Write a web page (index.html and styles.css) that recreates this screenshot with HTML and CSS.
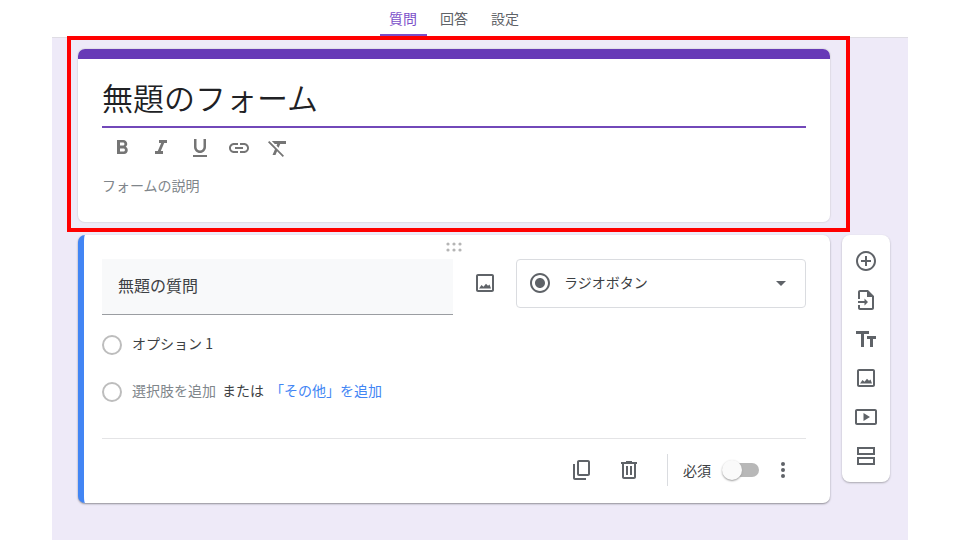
FILE: index.html
```html
<!DOCTYPE html>
<html lang="ja">
<head>
    <meta charset="UTF-8">
    <meta name="viewport" content="width=device-width, initial-scale=1.0">
    <title>無題のフォーム</title>
    <link rel="stylesheet" href="styles.css">
</head>
<body>
    <div class="editor">
        <nav class="tabs">
            <a class="tab active" href="#questions">質問</a>
            <a class="tab" href="#responses">回答</a>
            <a class="tab" href="#settings">設定</a>
        </nav>

        <main class="form-area" id="questions">
            <div class="highlight">
                <section class="card title-card">
                    <div class="title-bar"></div>
                    <div class="title-body">
                        <input class="form-title" type="text" value="無題のフォーム" aria-label="フォームのタイトル">
                        <div class="toolbar">
                            <button class="tool" type="button" aria-label="太字">
                                <svg class="icon" viewBox="0 0 24 24"><path d="M15.600 10.790c.97-.67 1.650-1.770 1.650-2.790 0-2.260-1.750-4-4-4H7v14h7.040c2.090 0 3.710-1.700 3.710-3.790 0-1.520-.86-2.820-2.150-3.420zM10 6.500h3c.83 0 1.500.67 1.500 1.500s-.67 1.500-1.500 1.500h-3v-3zm3.500 9H10v-3h3.500c.83 0 1.500.67 1.500 1.500s-.67 1.500-1.500 1.500z"/></svg>
                            </button>
                            <button class="tool" type="button" aria-label="斜体">
                                <svg class="icon" viewBox="0 0 24 24"><path d="M10 4v3h2.210l-3.420 8H6v3h8v-3h-2.210l3.420-8H18V4z"/></svg>
                            </button>
                            <button class="tool" type="button" aria-label="下線">
                                <svg class="icon" viewBox="0 0 24 24"><path d="M12 17c3.310 0 6-2.690 6-6V3h-2.500v8c0 1.930-1.570 3.500-3.500 3.500S8.500 12.930 8.500 11V3H6v8c0 3.310 2.690 6 6 6zm-7 2v2h14v-2H5z"/></svg>
                            </button>
                            <button class="tool" type="button" aria-label="リンクを挿入">
                                <svg class="icon" viewBox="0 0 24 24"><path d="M3.900 12c0-1.710 1.390-3.100 3.100-3.100h4V7H7c-2.760 0-5 2.240-5 5s2.240 5 5 5h4v-1.900H7c-1.710 0-3.100-1.390-3.100-3.100zM8 13h8v-2H8v2zm9-6h-4v1.900h4c1.710 0 3.100 1.390 3.100 3.100s-1.390 3.100-3.100 3.100h-4V17h4c2.760 0 5-2.240 5-5s-2.240-5-5-5z"/></svg>
                            </button>
                            <button class="tool" type="button" aria-label="書式をクリア">
                                <svg class="icon" viewBox="0 0 24 24"><path d="M3.270 5L2 6.270l6.970 6.970L6.500 19h3l1.570-3.660L16.730 21 18 19.730 3.550 5.270 3.270 5zM6 5v.18L8.820 8h2.400l-.72 1.680 2.100 2.100L14.210 8H20V5H6z"/></svg>
                            </button>
                        </div>
                        <input class="form-description" type="text" placeholder="フォームの説明" aria-label="フォームの説明">
                    </div>
                </section>
            </div>

            <section class="card question-card">
                <div class="drag-handle">
                    <svg width="16" height="10" viewBox="0 0 16 10"><circle cx="2" cy="2" r="1.600"/><circle cx="8" cy="2" r="1.600"/><circle cx="14" cy="2" r="1.600"/><circle cx="2" cy="8" r="1.600"/><circle cx="8" cy="8" r="1.600"/><circle cx="14" cy="8" r="1.600"/></svg>
                </div>

                <div class="question-row">
                    <input class="question-title" type="text" value="無題の質問" aria-label="質問">
                    <button class="image-button" type="button" aria-label="画像を追加">
                        <svg class="icon" viewBox="0 0 24 24"><path d="M19 5v14H5V5h14m0-2H5c-1.100 0-2 .9-2 2v14c0 1.100.9 2 2 2h14c1.100 0 2-.9 2-2V5c0-1.100-.9-2-2-2z"/><path d="M6 17.500l2.500-3.500 2 1.800 2.500-3 2 2 1.500-1.300 1.500 4z"/></svg>
                    </button>
                    <div class="type-box">
                        <svg class="icon" viewBox="0 0 24 24"><path d="M12 7c-2.760 0-5 2.240-5 5s2.240 5 5 5 5-2.240 5-5-2.240-5-5-5zm0-5C6.480 2 2 6.480 2 12s4.480 10 10 10 10-4.480 10-10S17.520 2 12 2zm0 18c-4.420 0-8-3.580-8-8s3.580-8 8-8 8 3.580 8 8-3.580 8-8 8z"/></svg>
                        <select class="type-select" aria-label="質問の種類">
                            <option>ラジオボタン</option>
                        </select>
                        <svg class="icon arrow" viewBox="0 0 24 24"><path d="M7 10l5 5 5-5z"/></svg>
                    </div>
                </div>

                <div class="option-row">
                    <input class="radio" type="radio" name="option" id="option1">
                    <label for="option1">オプション 1</label>
                </div>
                <div class="option-row">
                    <input class="radio" type="radio" name="option" id="option2">
                    <label class="add-option" for="option2">選択肢を追加</label>
                    <span>または</span>
                    <a class="add-other" href="#other">「その他」を追加</a>
                </div>

                <div class="card-footer">
                    <button class="footer-button" type="button" aria-label="コピーを作成">
                        <svg class="icon" viewBox="0 0 24 24"><path d="M18 2H9c-1.100 0-2 .9-2 2v12c0 1.100.9 2 2 2h9c1.100 0 2-.9 2-2V4c0-1.100-.9-2-2-2zm0 14H9V4h9v12zM3 6h2v14h11v2H5c-1.100 0-2-.9-2-2V6z"/></svg>
                    </button>
                    <button class="footer-button" type="button" aria-label="削除">
                        <svg class="icon" viewBox="0 0 24 24"><path d="M15 4V3H9v1H4v2h1v13c0 1.100.9 2 2 2h10c1.100 0 2-.9 2-2V6h1V4h-5zm2 15H7V6h10v13zM9 8h2v9H9zm4 0h2v9h-2z"/></svg>
                    </button>
                    <div class="separator"></div>
                    <label class="required-label" for="required">必須</label>
                    <input class="toggle" type="checkbox" id="required">
                    <button class="more-button" type="button" aria-label="その他のオプション">
                        <svg class="icon" viewBox="0 0 24 24"><circle cx="12" cy="6" r="2"/><circle cx="12" cy="12" r="2"/><circle cx="12" cy="18" r="2"/></svg>
                    </button>
                </div>
            </section>

            <aside class="side-menu">
                <button class="side-button" type="button" aria-label="質問を追加">
                    <svg class="icon" viewBox="0 0 24 24"><path d="M13 7h-2v4H7v2h4v4h2v-4h4v-2h-4V7zm-1-5C6.480 2 2 6.480 2 12s4.480 10 10 10 10-4.480 10-10S17.520 2 12 2zm0 18c-4.410 0-8-3.590-8-8s3.590-8 8-8 8 3.590 8 8-3.590 8-8 8z"/></svg>
                </button>
                <button class="side-button" type="button" aria-label="質問をインポート">
                    <svg class="icon" viewBox="0 0 24 24"><path d="M14 2H6c-1.100 0-2 .9-2 2v7h2V4h7v5h5v11H6v-3H4v3c0 1.100.9 2 2 2h12c1.100 0 2-.9 2-2V8l-6-6z"/><path d="M13 3v6h6z"/><path d="M4 13h6.500v-2.500L14 14l-3.500 3.500V15H4z"/></svg>
                </button>
                <button class="side-button" type="button" aria-label="タイトルと説明を追加">
                    <svg class="icon" viewBox="0 0 24 24"><path d="M2 4v3h5v13h3V7h5V4H2z"/><path d="M22 9h-9v3h3v8h3v-8h3V9z"/></svg>
                </button>
                <button class="side-button" type="button" aria-label="画像を追加">
                    <svg class="icon" viewBox="0 0 24 24"><path d="M19 5v14H5V5h14m0-2H5c-1.100 0-2 .9-2 2v14c0 1.100.9 2 2 2h14c1.100 0 2-.9 2-2V5c0-1.100-.9-2-2-2z"/><path d="M6 17.500l2.500-3.500 2 1.800 2.500-3 2 2 1.500-1.300 1.500 4z"/></svg>
                </button>
                <button class="side-button" type="button" aria-label="動画を追加">
                    <svg class="icon" viewBox="0 0 24 24"><path d="M9.500 8v8l6.500-4z"/><path d="M21 4H3c-1.100 0-2 .9-2 2v12c0 1.100.9 2 2 2h18c1.100 0 2-.9 2-2V6c0-1.100-.9-2-2-2zm0 14H3V6h18v12z"/></svg>
                </button>
                <button class="side-button" type="button" aria-label="セクションを追加">
                    <svg class="icon" viewBox="0 0 24 24"><path d="M19 5v4H5V5h14m2-2H3v8h18V3zM19 15v4H5v-4h14m2-2H3v8h18v-8z"/></svg>
                </button>
            </aside>
        </main>
    </div>
</body>
</html>
```
FILE: styles.css
```css
* {
    box-sizing: border-box;
}
body {
    margin: 0;
    background: #fff;
    color: #3c4043;
    font-family: "Noto Sans CJK JP", sans-serif;
    font-size: 14px;
}
button, input, select {
    margin: 0;
    padding: 0;
    border: 0;
    border-radius: 0;
    background: none;
    color: inherit;
    font: inherit;
    outline: none;
}
button, a, select {
    cursor: pointer;
}
a {
    text-decoration: none;
}
.icon {
    display: block;
    width: 24px;
    height: 24px;
    fill: #5f6368;
}

.editor {
    display: flex;
    flex-direction: column;
    min-height: 100vh;
    margin: 0 52px;
}

/* tabs */
.tabs {
    display: flex;
    justify-content: center;
    gap: 4px;
    height: 38px;
    padding-right: 52px;
    border-bottom: 1px solid #dfdde4;
}
.tab {
    width: 47px;
    border-bottom: 3px solid transparent;
    color: #5f6368;
    line-height: 36px;
    height: 37px;
    text-align: center;
}
.tab.active {
    border-bottom-color: #7b4fc9;
    color: #7b4fc9;
}

/* cards */
.form-area {
    display: grid;
    flex: 1;
    grid-template-columns: 1fr 48px;
    align-content: start;
    align-items: start;
    gap: 13px 12px;
    padding: 11px 18px 36px 26px;
    background: #eeeaf8;
}
.card {
    overflow: hidden;
    border-radius: 7px;
    background: #fff;
}
.highlight {
    position: relative;
    grid-column: 1;
}
.highlight::after {
    content: "";
    position: absolute;
    inset: -13px -20px -10px -11px;
    border: 4px solid #f00;
    pointer-events: none;
}
.title-card {
    box-shadow: 0 0 1px 1px #dfdce6;
}
.title-bar {
    height: 10px;
    background: #673ab7;
}
.title-body {
    padding: 19px 24px 24px;
}
.form-title {
    display: block;
    width: 100%;
    height: 50px;
    padding-bottom: 12px;
    border-bottom: 2px solid #7248b9;
    color: #202124;
    font-size: 31px;
    font-weight: 350;
}
.toolbar {
    display: flex;
    height: 40px;
}
.tool {
    display: grid;
    place-items: center;
    width: 39px;
}
.tool .icon {
    fill: #757575;
}
.form-description {
    display: block;
    width: 100%;
    height: 24px;
    margin-top: 6px;
    padding-bottom: 2px;
}
.form-description::placeholder {
    color: #80868b;
}

/* question */
.question-card {
    grid-column: 1;
    padding: 0 24px 0 18px;
    border-left: 6px solid #4285f4;
    box-shadow: 0 1px 2px 0 #8f8d96;
}
.drag-handle {
    display: flex;
    justify-content: center;
    height: 24px;
    padding-top: 7px;
}
.drag-handle svg {
    fill: #b5b5b5;
}
.question-row {
    display: flex;
    align-items: flex-start;
    margin-bottom: 6px;
}
.question-title {
    flex: 1;
    min-width: 0;
    height: 56px;
    padding: 0 16px 4px;
    border-bottom: 1px solid #9a9da1;
    background: #f8f9fa;
    font-size: 16px;
}
.image-button {
    display: grid;
    place-items: center;
    width: 63px;
    height: 47px;
}
.type-box {
    display: flex;
    align-items: center;
    width: 290px;
    height: 49px;
    padding: 0 12px 2px 11px;
    border: 1px solid #dadce0;
    border-radius: 4px;
}
.type-select {
    flex: 1;
    height: 46px;
    padding: 0 0 2px 12px;
    appearance: none;
}
.option-row {
    display: flex;
    align-items: center;
    gap: 6px;
    height: 47px;
}
.option-row label, .option-row span, .option-row a {
    padding-bottom: 3px;
}
.radio {
    width: 20px;
    height: 20px;
    margin-right: 4px;
    border: 2px solid #bdbdbd;
    border-radius: 50%;
    appearance: none;
}
.add-option {
    color: #80868b;
}
.add-other {
    color: #4285f4;
}
.card-footer {
    display: flex;
    align-items: center;
    justify-content: flex-end;
    height: 65px;
    margin-top: 23px;
    padding-bottom: 3px;
    border-top: 1px solid #e4e4e6;
}
.footer-button {
    display: grid;
    place-items: center;
    width: 47px;
    height: 40px;
}
.separator {
    width: 1px;
    height: 32px;
    margin: 0 15px;
    background: #dadce0;
}
.required-label {
    margin-right: 12px;
}
.toggle {
    position: relative;
    width: 36px;
    height: 14px;
    border-radius: 7px;
    background: #b8b8b8;
    appearance: none;
}
.toggle::before {
    content: "";
    position: absolute;
    top: -3px;
    left: -1px;
    width: 20px;
    height: 20px;
    border-radius: 50%;
    background: #fafafa;
    box-shadow: 0 1px 2px #999;
}
.toggle:checked::before {
    left: 17px;
}
.more-button {
    display: grid;
    place-items: center;
    width: 47px;
    height: 40px;
}

/* side menu */
.side-menu {
    display: flex;
    grid-column: 2;
    flex-direction: column;
    padding: 6px 0 7px;
    border-radius: 8px;
    background: #fff;
    box-shadow: 0 1px 2px 0 #a9a7b0;
}
.side-button {
    display: grid;
    place-items: center;
    height: 39px;
}
```
